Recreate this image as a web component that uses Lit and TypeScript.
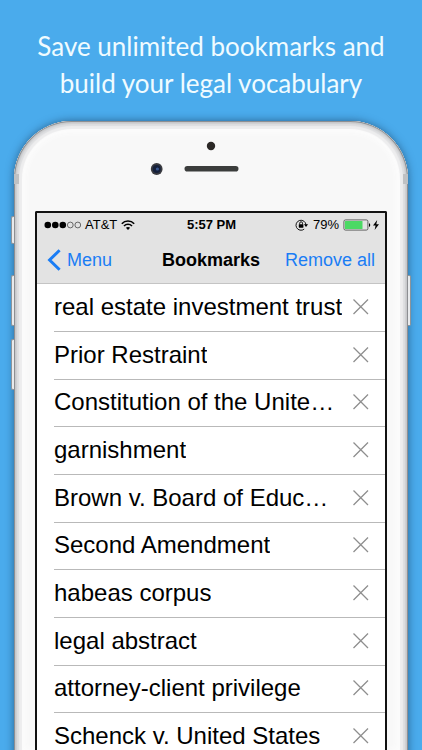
import { LitElement, html, css, svg } from "lit";
import { customElement, state } from "lit/decorators.js";

const TERMS = [
  "real estate investment trust",
  "Prior Restraint",
  "Constitution of the Unite…",
  "garnishment",
  "Brown v. Board of Educ…",
  "Second Amendment",
  "habeas corpus",
  "legal abstract",
  "attorney-client privilege",
  "Schenck v. United States",
];

@customElement("status-bar")
class StatusBar extends LitElement {
  static styles = css`
    :host {
      display: grid;
      grid-template-columns: 1fr auto 1fr;
      align-items: center;
      height: 24px;
      padding: 0 6px 2px 7px;
      font-size: 13px;
      line-height: 16px;
      white-space: nowrap;
    }
    .side {
      display: flex;
      align-items: center;
      gap: 4px;
    }
    .end {
      justify-content: flex-end;
    }
    .time {
      font-weight: bold;
    }
    .battery {
      display: flex;
      align-items: center;
      gap: 2px;
    }
    svg {
      display: block;
      flex: none;
    }
  `;

  render() {
    return html`
      <div class="side">
        <svg width="37" height="8" viewBox="0 0 37 8" aria-label="Signal strength">
          ${[0, 1, 2, 3, 4].map(
            (i) => svg`<circle cx=${3.8 + i * 7.5} cy="4" r=${i < 3 ? 3.3 : 2.9}
              fill=${i < 3 ? "#000" : "none"} stroke=${i < 3 ? "none" : "#333"} stroke-width="0.7"/>`
          )}
        </svg>
        <span>AT&amp;T</span>
        <svg width="14" height="10" viewBox="0 0 14 10" fill="none" stroke="#000" stroke-width="1.6" aria-label="Wi-Fi">
          <path d="M0.8 3.7C4.2 0.1 9.8 0.1 13.2 3.7" />
          <path d="M3 6C5.2 3.7 8.8 3.7 11 6" />
          <path d="M4.9 7.8C6.1 6.6 7.9 6.6 9.1 7.8L7 10Z" fill="#000" stroke="none" />
        </svg>
      </div>
      <span class="time">5:57 PM</span>
      <div class="side end">
        <svg width="14" height="12" viewBox="0 0 14 12" aria-label="Rotation lock">
          <path d="M9.2 10.1A5 5 0 1 1 11 6" fill="none" stroke="#000" stroke-width="0.9" />
          <path d="M8.9 5.3H13.1L11 8Z" />
          <rect x="3.8" y="5.2" width="4.6" height="3.5" rx="0.4" />
          <path d="M4.7 5.4V4.2A1.4 1.4 0 0 1 7.5 4.2V5.4" fill="none" stroke="#000" stroke-width="0.9" />
        </svg>
        <span>79%</span>
        <div class="battery">
          <svg width="28" height="12" viewBox="0 0 28 12" aria-label="Battery">
            <rect x="0.9" y="0.9" width="24" height="10.2" rx="1.6" fill="none" stroke="#444" stroke-width="0.8" />
            <rect x="1.9" y="1.9" width="17.6" height="8.2" rx="0.6" fill="#4cd964" />
            <path d="M26 4.2C27.6 4.4 27.6 7.6 26 7.8Z" />
          </svg>
          <svg width="6" height="10" viewBox="0 0 6 10" aria-label="Charging">
            <path d="M4.2 0L0 5.5H2.6L1.6 10L6 4.2H3.3Z" />
          </svg>
        </div>
      </div>
    `;
  }
}

@customElement("bookmark-list")
class BookmarkList extends LitElement {
  @state() private terms = TERMS;

  static styles = css`
    :host {
      display: block;
      background: #fff;
    }
    .list {
      display: grid;
      grid-auto-rows: 48px 48px 47px;
      margin: 0;
      padding: 0 0 0 17px;
      list-style: none;
    }
    .row {
      display: flex;
      align-items: center;
      justify-content: space-between;
      min-width: 0;
      padding: 0 16px 2px 0;
      border-bottom: 1px solid #b9b9b9;
      font-size: 24px;
      line-height: 28px;
    }
    .term {
      overflow: hidden;
      white-space: nowrap;
    }
    .remove {
      flex: none;
      padding: 0;
      border: 0;
      background: none;
      cursor: pointer;
    }
    .remove svg {
      display: block;
    }
  `;

  render() {
    return html`
      <ul class="list">
        ${this.terms.map(
          (term) => html`
            <li class="row">
              <span class="term">${term}</span>
              <button
                class="remove"
                aria-label="Remove ${term}"
                @click=${() => (this.terms = this.terms.filter((t) => t !== term))}
              >
                <svg width="16" height="16" viewBox="0 0 16 16">
                  <path d="M0.5 0.5L15 15M15 0.5L0.5 15" stroke="#8e8e8e" stroke-width="1.3" />
                </svg>
              </button>
            </li>
          `
        )}
      </ul>
    `;
  }
}

@customElement("app-root")
class AppRoot extends LitElement {
  static styles = css`
    :host {
      display: flex;
      flex-direction: column;
      box-sizing: border-box;
      height: 100vh;
      overflow: hidden;
      padding: 28px 14px 0;
      background: #4aabec;
      color: #000;
      font-family: "Liberation Sans", Arial, sans-serif;
    }
    .caption {
      margin: 0 0 19px;
      color: #f0fbff;
      font: 400 26px/37px Lato, sans-serif;
      text-align: center;
    }
    .phone {
      position: relative;
      flex: 1 0 auto;
      padding: 0 21px;
      border-radius: 58px 58px 0 0;
      background: #f8f8f8;
      box-shadow:
        inset 0 0 1px 1px #85888b,
        inset 0 0 1px 3px #cfd0d2,
        inset 0 0 1px 5px #dddee0,
        inset 0 0 1px 8px #ededee,
        inset 0 0 6px 11px #fdfdfd,
        0 0 8px rgba(20, 50, 80, 0.6);
    }
    .key,
    .band {
      position: absolute;
      box-sizing: border-box;
      width: 3px;
      height: 51px;
      border: 1px solid #8d949a;
      background: #e8eaec;
    }
    .left {
      right: 100%;
      border-right: 0;
      border-radius: 2px 0 0 2px;
    }
    .right {
      left: 100%;
      border-left: 0;
      border-radius: 0 2px 2px 0;
    }
    .mute {
      top: 95px;
      height: 28px;
    }
    .upper {
      top: 154px;
    }
    .lower {
      top: 218px;
    }
    .band {
      top: 53px;
      height: 10px;
      width: 5px;
      border: 0;
      background: #bfc1c3;
    }
    .west {
      left: 0;
    }
    .east {
      right: 0;
    }
    .bezel {
      display: flex;
      justify-content: center;
      box-sizing: border-box;
      height: 90px;
      padding-top: 15px;
    }
    .bezel svg {
      display: block;
    }
    .screen {
      border: 2px solid #111;
      border-bottom: 0;
      border-radius: 2px 2px 0 0;
      background: #fff;
    }
    .top {
      border-bottom: 1px solid #c4c4c4;
      background: #e3e3e3;
    }
    .nav {
      display: grid;
      grid-template-columns: 1fr auto 1fr;
      align-items: center;
      height: 42px;
      padding: 0 10px 2px;
      font-size: 18px;
      line-height: 22px;
    }
    .title {
      margin: 0;
      font-size: 18px;
      font-weight: bold;
    }
    .back {
      display: flex;
      align-items: center;
      gap: 6px;
      color: #1a7df5;
      text-decoration: none;
    }
    .clear {
      justify-self: end;
      padding: 0;
      border: 0;
      background: none;
      color: #1a7df5;
      font: inherit;
      white-space: nowrap;
      cursor: pointer;
    }
  `;

  render() {
    return html`
      <h1 class="caption">Save unlimited bookmarks and<br />build your legal vocabulary</h1>
      <div class="phone">
        <span class="key left mute"></span>
        <span class="key left upper"></span>
        <span class="key left lower"></span>
        <span class="key right upper"></span>
        <span class="band west"></span>
        <span class="band east"></span>
        <div class="bezel">
          <svg width="122" height="40" viewBox="0 0 122 40" aria-hidden="true">
            <circle cx="61" cy="10" r="4.2" fill="#2b2826" />
            <rect x="34.5" y="30" width="54" height="5.6" rx="2.8" fill="#3b3d3c" />
            <circle cx="6.7" cy="33" r="5.9" fill="#3a3b40" />
            <circle cx="6.7" cy="33" r="4" fill="#15203a" />
            <circle cx="7.4" cy="33" r="1.6" fill="#3a5790" />
          </svg>
        </div>
        <div class="screen">
          <header class="top">
            <status-bar></status-bar>
            <nav class="nav">
              <a class="back" href="#menu">
                <svg width="14" height="22" viewBox="0 0 14 22" aria-hidden="true">
                  <path d="M12.6 1.2L2.6 11L12.6 20.8" fill="none" stroke="#1a7df5" stroke-width="3" />
                </svg>
                Menu
              </a>
              <h2 class="title">Bookmarks</h2>
              <button class="clear">Remove all</button>
            </nav>
          </header>
          <bookmark-list></bookmark-list>
        </div>
      </div>
    `;
  }
}
